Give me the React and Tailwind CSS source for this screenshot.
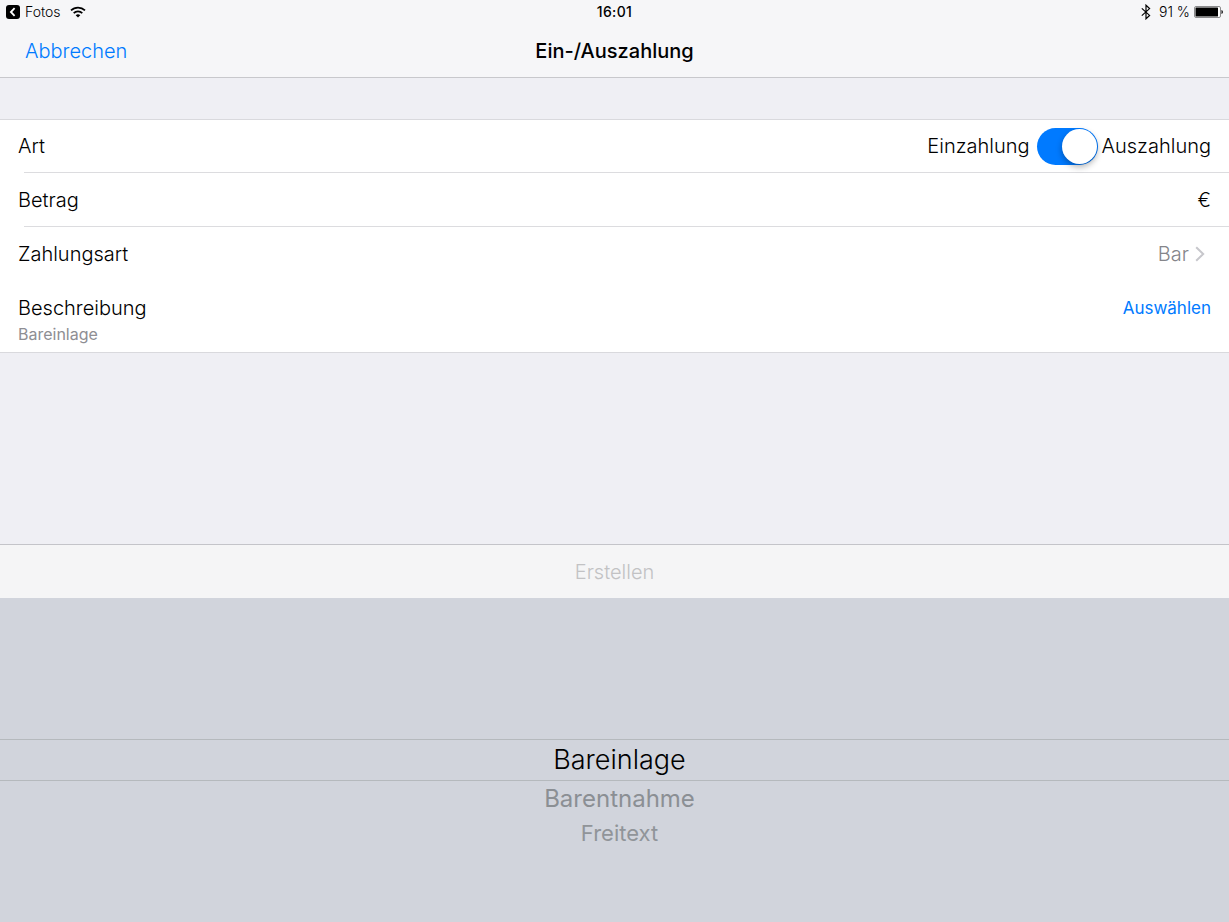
import React, { useState } from 'react';

const PICKER_OPTIONS = [
  { label: 'Bareinlage', className: 'h-[42px] border-y border-[#b5b9bd] text-[27px] text-black' },
  { label: 'Barentnahme', className: 'h-9 text-2xl font-normal text-[#8b8f94]' },
  { label: 'Freitext', className: 'h-8 text-[22px] font-normal text-[#909499]' },
];

const BackIcon = () => (
  <svg width="14" height="14" viewBox="0 0 14 14" aria-hidden="true">
    <rect width="14" height="14" rx="3" fill="#000" />
    <path d="M8.6 3.2 4.9 7l3.7 3.8" fill="none" stroke="#fff" strokeWidth="1.8" />
  </svg>
);

const WifiIcon = () => (
  <svg width="16" height="12" viewBox="0 0 16 12" fill="none" stroke="#000" strokeWidth="1.7" aria-hidden="true">
    <path d="M1 4.4a10 10 0 0 1 14 0" />
    <path d="M3.7 7.2a6.1 6.1 0 0 1 8.6 0" />
    <path d="M8 11.6 5.7 9.3a3.3 3.3 0 0 1 4.6 0Z" fill="#000" stroke="none" />
  </svg>
);

const BluetoothIcon = () => (
  <svg width="10" height="16" viewBox="0 0 10 16" fill="none" stroke="#000" strokeWidth="1.2" aria-hidden="true">
    <path d="M.8 4.4 8.6 11.4 5 14.8V1.2l3.6 3.4L.8 11.6" />
  </svg>
);

const BatteryIcon = () => (
  <svg width="29" height="12" viewBox="0 0 29 12" aria-hidden="true">
    <rect x=".5" y=".5" width="26" height="11" rx="1.5" fill="#fff" stroke="#8b8b8d" />
    <rect x="1.5" y="1.5" width="22.5" height="9" rx=".5" fill="#000" />
    <path d="M27.5 4c1.8.4 1.8 3.6 0 4Z" fill="#000" />
  </svg>
);

const ChevronIcon = () => (
  <svg width="10" height="16" viewBox="0 0 10 16" fill="none" stroke="#c7c7cc" strokeWidth="2" aria-hidden="true">
    <path d="m1.2 1.2 7 6.8-7 6.8" />
  </svg>
);

const StatusBar = () => (
  <div className="grid grid-cols-3 items-center h-6 px-[6px] text-sm">
    <div className="flex items-center">
      <BackIcon />
      <span className="ml-[5px] mr-[9px]">Fotos</span>
      <WifiIcon />
    </div>
    <time className="text-center font-medium tracking-wide">16:01</time>
    <div className="flex items-center justify-end">
      <BluetoothIcon />
      <span className="ml-2 mr-1">91 %</span>
      <BatteryIcon />
    </div>
  </div>
);

const App = () => {
  const [isPayout, setIsPayout] = useState(true);
  const [amount, setAmount] = useState('');
  const [description, setDescription] = useState('Bareinlage');

  return (
    <div className="min-h-screen flex flex-col bg-[#efeff4] text-black text-xl font-light font-['Inter',sans-serif]">
      <header className="bg-[#f6f6f8] border-b border-[#c8c8cc]">
        <StatusBar />
        <div className="grid grid-cols-3 items-center h-[53px] px-[25px]">
          <button type="button" className="justify-self-start text-[#007aff]">Abbrechen</button>
          <h1 className="text-center font-medium">Ein-/Auszahlung</h1>
        </div>
      </header>

      <main className="flex-1 pt-[41px]">
        <form className="bg-white border-y border-[#d9d9dd]">
          <div className="flex items-center justify-between h-[52px] px-[18px]">
            <span>Art</span>
            <label className="flex items-center">
              <span className="mr-[7px]">Einzahlung</span>
              <input
                type="checkbox"
                role="switch"
                checked={isPayout}
                onChange={(e) => setIsPayout(e.target.checked)}
                className="appearance-none w-[61px] h-[37px] p-px rounded-full bg-[#e5e5ea] checked:bg-[#007aff] before:block before:size-[35px] before:rounded-full before:bg-white before:shadow-[0_3px_6px_rgba(0,0,0,0.3)] checked:before:ml-6"
              />
              <span className="ml-1">Auszahlung</span>
            </label>
          </div>

          <div className="ml-6 border-t border-[#dcdcdf]" />
          <div className="flex items-center h-[53px] px-[18px]">
            <label htmlFor="amount">Betrag</label>
            <input
              id="amount"
              type="text"
              inputMode="decimal"
              value={amount}
              onChange={(e) => setAmount(e.target.value)}
              className="flex-1 px-2 text-right outline-none"
            />
            <span>€</span>
          </div>

          <div className="ml-6 border-t border-[#dcdcdf]" />
          <div className="flex items-center justify-between h-[54px] pl-[18px] pr-6">
            <span>Zahlungsart</span>
            <button type="button" className="flex items-center gap-[6px] text-[#85858a]">
              Bar
              <ChevronIcon />
            </button>
          </div>

          <div className="flex items-start justify-between px-[18px] pt-[13px] pb-[6px]">
            <div>
              <div className="leading-7">Beschreibung</div>
              <div className="text-base leading-6 font-normal text-[#8e8e93]">{description}</div>
            </div>
            <button type="button" className="text-[17px] leading-7 font-normal text-[#007aff]">Auswählen</button>
          </div>
        </form>
      </main>

      <footer>
        <div className="flex h-[54px] border-t border-[#c4c4c9] bg-[#f5f5f6]">
          <button type="submit" disabled className="flex-1 text-[#c2c2c4]">Erstellen</button>
        </div>
        <fieldset className="bg-[#d1d4dc] pt-[141px] pb-[73px]" aria-label="Beschreibung">
          {PICKER_OPTIONS.map((option) => (
            <label key={option.label} className={`flex items-center justify-center pl-[10px] ${option.className}`}>
              <input
                type="radio"
                name="description"
                checked={description === option.label}
                onChange={() => setDescription(option.label)}
                className="sr-only"
              />
              {option.label}
            </label>
          ))}
        </fieldset>
      </footer>
    </div>
  );
};

export default App;
